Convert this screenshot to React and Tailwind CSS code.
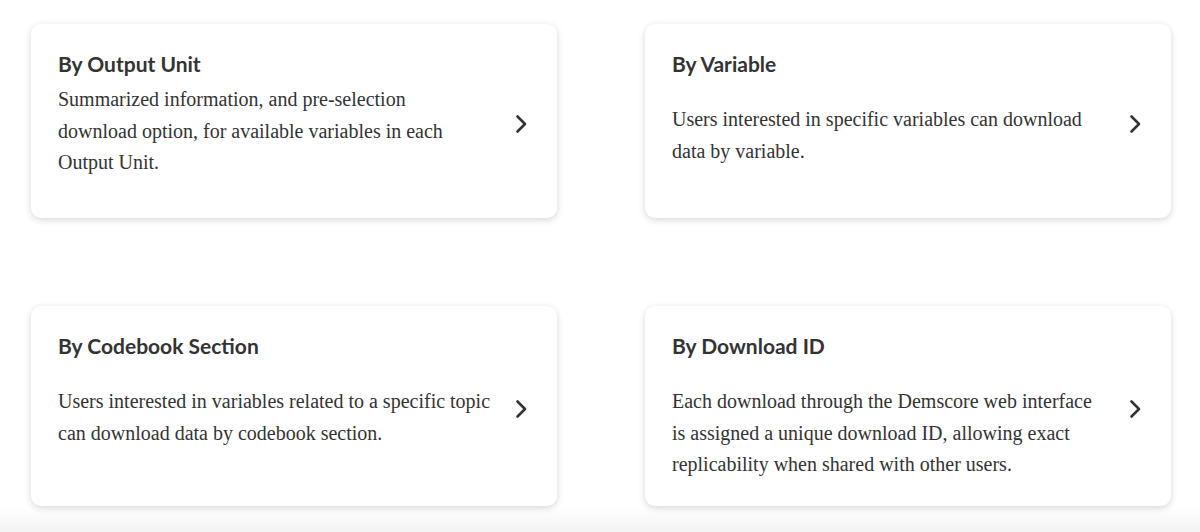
import React from "react";

const cards = [
  {
    title: "By Output Unit",
    lines: [
      "Summarized information, and pre-selection",
      "download option, for available variables in each",
      "Output Unit.",
    ],
    gap: "mt-[8px]",
    h: "h-[194px]",
  },
  {
    title: "By Variable",
    lines: [
      "Users interested in specific variables can download",
      "data by variable.",
    ],
    gap: "mt-[28px]",
    h: "h-[194px]",
  },
  {
    title: "By Codebook Section",
    lines: [
      "Users interested in variables related to a specific topic",
      "can download data by codebook section.",
    ],
    gap: "mt-[28px]",
    h: "h-[200px]",
  },
  {
    title: "By Download ID",
    lines: [
      "Each download through the Demscore web interface",
      "is assigned a unique download ID, allowing exact",
      "replicability when shared with other users.",
    ],
    gap: "mt-[28px]",
    h: "h-[200px]",
  },
];

function Chevron() {
  return (
    <svg width="13" height="20" viewBox="0 0 13 20" fill="none" className="shrink-0">
      <path d="M2.5 2.5 L10 10 L2.5 17.5" stroke="#333333" strokeWidth="2.6" strokeLinecap="round" strokeLinejoin="round" />
    </svg>
  );
}

function Card({ c }) {
  return (
    <div className={`${c.h} bg-white rounded-[10px] shadow-[0_2px_7px_rgba(0,0,0,0.16)] flex items-center pl-[27px] pr-[29px]`}>
      <div className="flex-1 self-stretch pt-[27px]">
        <h3 className="text-[21px] leading-[25px] font-bold text-[#333333]" style={{ fontFamily: "Lato, sans-serif" }}>
          {c.title}
        </h3>
        <div className={`${c.gap} text-[20px] leading-[31.5px] text-[#333333]`} style={{ fontFamily: "'Liberation Serif', serif" }}>
          {c.lines.map((l, i) => (
            <div key={i} className="whitespace-nowrap">{l}</div>
          ))}
        </div>
      </div>
      <div className="mt-[6px]">
        <Chevron />
      </div>
    </div>
  );
}

export default function App() {
  return (
    <div className="w-[1200px] h-[532px] bg-white relative overflow-hidden">
      <div className="absolute left-0 right-0 bottom-0 h-[24px] bg-gradient-to-b from-white to-[#f3f3f3]" />
      <div className="relative pt-[24px] pl-[31px] grid grid-cols-[526px_526px] gap-x-[88px] gap-y-[88px]">
        {cards.map((c, i) => (
          <Card key={i} c={c} />
        ))}
      </div>
    </div>
  );
}
